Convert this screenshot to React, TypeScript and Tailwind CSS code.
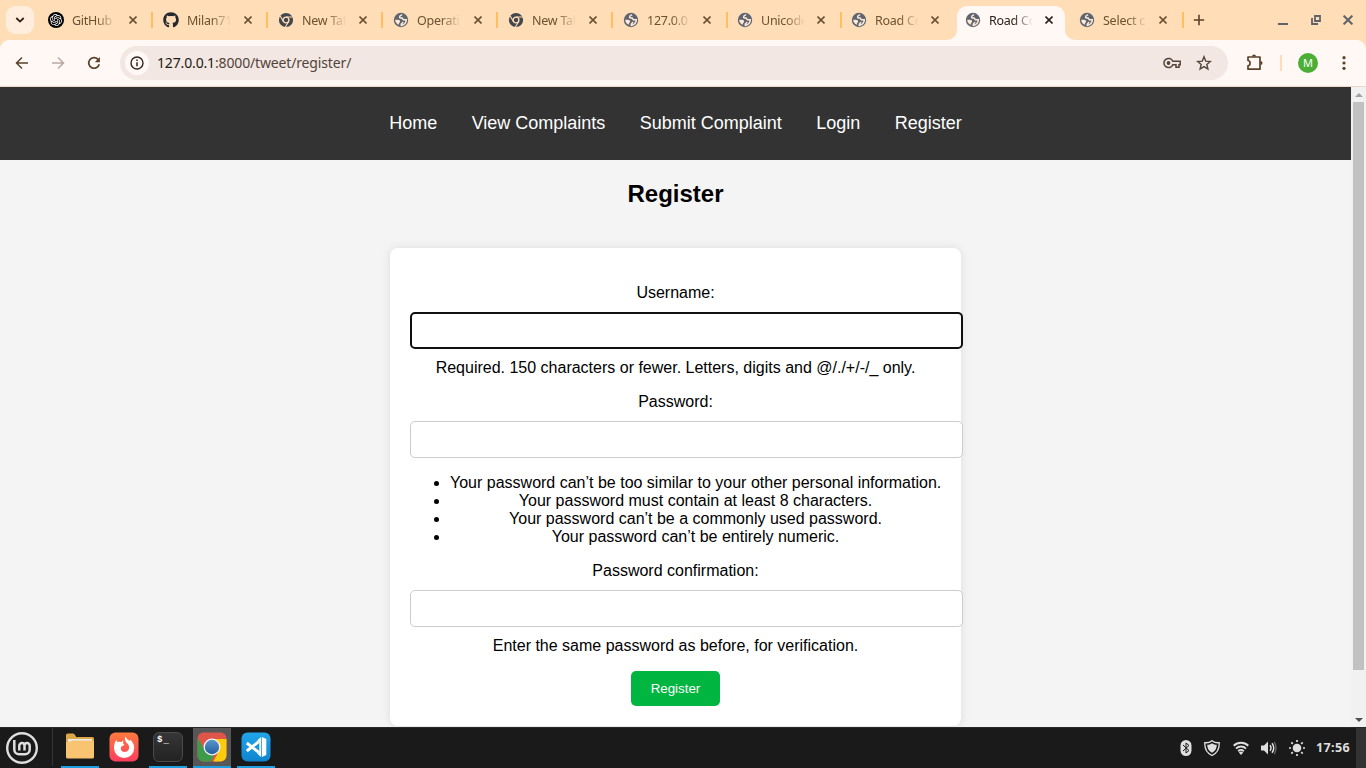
import React from "react";
import { FaGithub } from "react-icons/fa";
import { SiOpenai } from "react-icons/si";

type Kind = "openai" | "github" | "chrome" | "globe";
type TabInfo = { icon: Kind; title: string; width: string; gap: string; active?: boolean; separator?: boolean };

const tabs: TabInfo[] = [
  { icon: "openai", title: "GitHub", width: "w-[115px]", gap: "ml-[13px]", separator: true },
  { icon: "github", title: "Milan71", width: "w-[115px]", gap: "ml-[13px]", separator: true },
  { icon: "chrome", title: "New Tab", width: "w-[115px]", gap: "ml-[13px]", separator: true },
  { icon: "globe", title: "Operati", width: "w-[115px]", gap: "ml-[13px]", separator: true },
  { icon: "chrome", title: "New Tab", width: "w-[115px]", gap: "ml-[13px]", separator: true },
  { icon: "globe", title: "127.0.0", width: "w-[114px]", gap: "ml-3", separator: true },
  { icon: "globe", title: "Unicode", width: "w-[114px]", gap: "ml-3", separator: true },
  { icon: "globe", title: "Road Co", width: "w-[114px]", gap: "ml-3" },
  { icon: "globe", title: "Road Co", width: "w-[114px]", gap: "ml-3", active: true },
  { icon: "globe", title: "Select c", width: "w-[114px]", gap: "ml-3", separator: true },
];

function Favicon({ kind }: { kind: Kind }) {
  if (kind === "openai")
    return (
      <span className="flex size-4 items-center justify-center rounded-full bg-black">
        <SiOpenai className="size-3 text-white" />
      </span>
    );
  if (kind === "github") return <FaGithub className="size-4 text-[#24292f]" />;
  if (kind === "chrome")
    return (
      <svg viewBox="0 0 16 16" className="size-4">
        <circle cx="8" cy="8" r="7.1" fill="#41474d" />
        <circle cx="8" cy="8" r="2.9" fill="none" stroke="#ffddb6" strokeWidth="1.4" />
        <path d="M8 5h6.500M5.400 9.500L2.200 4M10.600 9.500L7.400 15" stroke="#ffddb6" strokeWidth="1.100" />
      </svg>
    );
  return (
    <svg viewBox="0 0 16 16" className="size-4">
      <circle cx="8" cy="8" r="7.2" fill="#5f6570" />
      <path
        d="M9.200 2.600C8 3 6.600 3.600 6.600 4.900c0 1.300 1.200 1.200 2.200 1.100.9 0 .9.700 1.200 1.300.4.800 1.700.500 3.300.5-.1 2.800-2 5.100-5 5.600v-1.300c.8-.7 1.700-1.200 1.400-2.200"
        fill="none"
        stroke="#ffead6"
        strokeWidth="1.500"
      />
      <path d="M2.200 7.800h2.700c1.300 0 2.300.7 2.200 1.900-.1 1-1.200.9-1.200 1.700v1.400C3.600 12 2.200 10.200 2.200 7.800z" fill="#ffead6" />
    </svg>
  );
}

function Cross({ className }: { className: string }) {
  return (
    <svg viewBox="0 0 8 8" className={className}>
      <path d="M.5.5l7 7M7.500.5l-7 7" stroke="currentColor" strokeWidth="1.600" />
    </svg>
  );
}

function Tab({ tab }: { tab: TabInfo }) {
  return (
    <div className={`flex h-[34px] shrink-0 ${tab.width}`}>
      <div
        className={`relative flex h-[34px] w-[108px] items-center pb-[6px] pl-2 ${
          tab.active ? "rounded-t-[10px] bg-[#fff8f5] text-[#2b201a]" : "text-[#6b5233]"
        }`}
      >
        {tab.active && (
          <>
            <svg viewBox="0 0 10 10" className="absolute bottom-0 -left-[10px] size-[10px]">
              <path d="M10 0v10H0A10 10 0 0 0 10 0z" fill="#fff8f5" />
            </svg>
            <svg viewBox="0 0 10 10" className="absolute -right-[10px] bottom-0 size-[10px]">
              <path d="M0 0v10h10A10 10 0 0 1 0 0z" fill="#fff8f5" />
            </svg>
          </>
        )}
        <Favicon kind={tab.icon} />
        <span className="mt-px ml-2 w-[44px] overflow-hidden text-[12.500px] leading-[18px] tracking-[-0.250px] whitespace-nowrap [mask-image:linear-gradient(to_right,#000_55%,transparent)]">
          {tab.title}
        </span>
        <Cross className={`size-2 shrink-0 ${tab.gap}`} />
      </div>
      {tab.separator && <div className="mt-[6px] ml-[3px] h-4 w-[2px] bg-[#ffbf60]" />}
    </div>
  );
}

function TabStrip() {
  return (
    <div className="flex h-10 bg-[#ffddb6] pt-[6px]">
      <div className="ml-[6px] flex size-7 shrink-0 items-center justify-center rounded-[9px] bg-[#ffeedd]">
        <svg viewBox="0 0 10 6" className="h-[6px] w-[10px]">
          <path d="M1.300 1L5 4.600 8.700 1" fill="none" stroke="#2e2014" strokeWidth="1.800" />
        </svg>
      </div>
      <div className="ml-[6px] flex">
        {tabs.map((tab, i) => (
          <Tab key={i} tab={tab} />
        ))}
      </div>
      <svg viewBox="0 0 12 12" className="mt-2 ml-[8px] size-3 shrink-0">
        <path d="M6 .8v10.400M.8 6h10.400" stroke="#5a4128" strokeWidth="1.600" />
      </svg>
      <div className="ml-auto flex h-7 items-center gap-[22px] pr-[13px] text-[#5d626b]">
        <svg viewBox="0 0 10 10" className="mr-px size-[10px]">
          <path d="M0 9h10" stroke="currentColor" strokeWidth="2" />
        </svg>
        <svg viewBox="0 0 10 10" className="size-[10px]">
          <path d="M4 1h5v5H4zM1 3v6h6" fill="none" stroke="currentColor" strokeWidth="1.800" />
        </svg>
        <Cross className="size-[10px]" />
      </div>
    </div>
  );
}

function Toolbar() {
  return (
    <div className="h-[47px] bg-[#ffddb6]">
      <div className="flex h-[47px] items-center rounded-t-[9px] border-b border-[#f1d6c3] bg-[#fff8f5] text-[#5a4128]">
        <svg viewBox="0 0 14 14" className="ml-[15px] size-[14px]">
          <path d="M13 7H2M7 1.500L1.500 7 7 12.500" fill="none" stroke="currentColor" strokeWidth="1.500" />
        </svg>
        <svg viewBox="0 0 14 14" className="ml-[22px] size-[14px] text-[#b7aaa2]">
          <path d="M1 7h11M7 1.500L12.500 7 7 12.500" fill="none" stroke="currentColor" strokeWidth="1.500" />
        </svg>
        <svg viewBox="0 0 14 14" className="ml-[22px] size-[14px]">
          <path d="M12.200 8.200A5.300 5.300 0 1 1 11 3.400l1 1" fill="none" stroke="currentColor" strokeWidth="1.700" />
          <path d="M12.900 1v5.200H7.800z" fill="currentColor" />
        </svg>
        <div className="ml-[19px] flex h-[34px] w-[1108px] items-center rounded-full bg-[#f2e7e2] pl-[5px]">
          <div className="flex size-6 items-center justify-center rounded-full bg-[#fff8f5]">
            <svg viewBox="0 0 14 14" className="size-[14px] text-[#2e2723]">
              <circle cx="7" cy="7" r="6" fill="none" stroke="currentColor" strokeWidth="1.400" />
              <path d="M7 6.200v4M7 3.500v1.500" stroke="currentColor" strokeWidth="1.500" />
            </svg>
          </div>
          <span className="mb-px ml-2 w-[200px] text-[14px] tracking-[-0.150px] whitespace-nowrap text-[#51443b]">
            <span className="text-[#241a14]">127.0.0.1</span>:8000/tweet/register/
          </span>
          <svg viewBox="0 0 18 12" className="ml-auto h-3 w-[18px] text-[#55453b]">
            <path
              d="M9.800 4.300A4.600 4.600 0 1 0 9.800 7.700h3.200v2.500h3V7.700h1.200V4.300z"
              fill="none"
              stroke="currentColor"
              strokeWidth="1.500"
            />
            <circle cx="5.500" cy="6" r="1.900" fill="currentColor" />
          </svg>
          <svg viewBox="0 0 16 16" className="mr-4 ml-[15px] size-4 text-[#55453b]">
            <path
              d="M8 1.800l1.700 4.300 4.600.4-3.500 3 1.100 4.500L8 11.600 4.100 14l1.100-4.500-3.500-3 4.600-.4z"
              fill="none"
              stroke="currentColor"
              strokeWidth="1.400"
            />
          </svg>
        </div>
        <svg viewBox="0 0 17 17" className="mt-[-2px] ml-[18px] size-[17px]">
          <path
            d="M2 3h12v12.200H2v-3.400c2.800-.5 2.800-4.800 0-5.300z"
            fill="none"
            stroke="currentColor"
            strokeWidth="1.700"
            strokeLinejoin="round"
          />
          <path d="M6 2.500a2 2 0 0 1 4 0zM14.500 7a2 2 0 0 1 0 4z" fill="currentColor" />
        </svg>
        <div className="ml-[17px] h-4 w-[2px] bg-[#ffddb6]" />
        <div className="ml-4 flex size-5 items-center justify-center rounded-full bg-[#4caf35] text-[11px] text-white">
          M
        </div>
        <svg viewBox="0 0 4 14" className="ml-6 h-[14px] w-1">
          <circle cx="2" cy="1.700" r="1.600" fill="currentColor" />
          <circle cx="2" cy="7" r="1.600" fill="currentColor" />
          <circle cx="2" cy="12.300" r="1.600" fill="currentColor" />
        </svg>
      </div>
    </div>
  );
}

function Field({ focused }: { focused?: boolean }) {
  return (
    <input
      className={`mt-[10px] block h-[37px] w-[553px] rounded-[5px] bg-white px-2 outline-none ${
        focused ? "border-2 border-[#101010]" : "border border-[#ccc]"
      }`}
    />
  );
}

const rules = [
  "Your password can’t be too similar to your other personal information.",
  "Your password must contain at least 8 characters.",
  "Your password can’t be a commonly used password.",
  "Your password can’t be entirely numeric.",
];

function Page() {
  return (
    <div className="flex h-[640px] bg-[#f4f4f4] font-['Liberation_Sans',sans-serif] text-black">
      <main className="h-[640px] w-[1351px] overflow-hidden">
        <nav className="flex h-[73px] items-center justify-center gap-[34.450px] bg-[#333] text-[18px] text-white">
          <a>Home</a>
          <a>View Complaints</a>
          <a>Submit Complaint</a>
          <a>Login</a>
          <a>Register</a>
        </nav>
        <h2 className="mt-5 text-center text-2xl leading-7 font-bold">Register</h2>
        <form className="mx-auto mt-10 h-[478px] w-[571px] rounded-[8px] bg-white px-5 pt-9 text-center text-base leading-[18px] shadow-[0_0_10px_rgba(0,0,0,0.1)]">
          <label className="block">Username:</label>
          <Field focused />
          <p className="mt-[10px]">Required. 150 characters or fewer. Letters, digits and @/./+/-/_ only.</p>
          <label className="mt-4 block">Password:</label>
          <Field />
          <ul className="mt-4 list-disc pl-10 whitespace-nowrap">
            {rules.map((rule) => (
              <li key={rule}>{rule}</li>
            ))}
          </ul>
          <label className="mt-4 block">Password confirmation:</label>
          <Field />
          <p className="mt-[10px]">Enter the same password as before, for verification.</p>
          <button type="button" className="mt-4 h-[35px] w-[89px] rounded-[5px] bg-[#00b640] text-[13.333px] text-white">
            Register
          </button>
        </form>
      </main>
      <div className="flex w-[15px] flex-col items-center bg-[#f1f1f1]">
        <svg viewBox="0 0 8 4" className="mt-[6px] h-1 w-2">
          <path d="M0 4l4-4 4 4z" fill="#a3a3a3" />
        </svg>
        <div className="mt-[5px] h-[568px] w-[11px] bg-[#c1c1c1]" />
        <svg viewBox="0 0 8 4" className="mt-auto mb-[5px] h-1 w-2">
          <path d="M0 0l4 4 4-4z" fill="#505050" />
        </svg>
      </div>
    </div>
  );
}

function Launcher({ open, active, children }: { open?: boolean; active?: boolean; children: React.ReactNode }) {
  return (
    <div
      className={`flex h-10 w-[38px] items-center justify-center border-b-2 ${
        open ? "border-[#1e9fe0]" : "border-transparent"
      } ${active ? "bg-[#575757]" : ""}`}
    >
      {children}
    </div>
  );
}

function Taskbar() {
  return (
    <div className="flex h-[41px] border-t border-[#292929] bg-[#1a1a1a] text-[#dfdfdf]">
      <svg viewBox="0 0 32 32" className="mt-1 ml-[6px] size-8">
        <circle cx="16" cy="16" r="14.800" fill="none" stroke="#dedede" strokeWidth="2.400" />
        <path
          d="M8.300 8v9.500a4.800 4.800 0 0 0 4.800 4.800h5.800a4.800 4.800 0 0 0 4.800-4.800V13.600a2.600 2.600 0 0 0-5.200 0v5M18.500 13.600a2.600 2.600 0 0 0-5.200 0v5"
          fill="none"
          stroke="#dedede"
          strokeWidth="2.500"
        />
      </svg>
      <div className="ml-[14px] h-[38px] w-px bg-[#343434]" />
      <div className="ml-2 flex gap-[6px]">
        <Launcher open>
          <svg viewBox="0 0 28 26" className="mb-[3px] h-[26px] w-7">
            <path d="M0 2q0-1.500 1.500-1.500H7q1 0 1.700 1l1.500 2.500H26.500Q28 4 28 5.500V12H0z" fill="#dda648" />
            <path d="M2 6h24v4H2z" fill="#ececec" />
            <path d="M0 10q0-1.500 1.500-1.500H4L6 7.500h20.500Q28 7.500 28 9v15q0 1.500-1.500 1.500h-25Q0 25.500 0 24z" fill="#f8c471" />
          </svg>
        </Launcher>
        <Launcher>
          <svg viewBox="0 0 30 30" className="size-[30px]">
            <defs>
              <linearGradient id="fire" x1="0" y1="0" x2="0" y2="1">
                <stop stopColor="#ff7a3d" />
                <stop offset="1" stopColor="#ff3e5e" />
              </linearGradient>
            </defs>
            <rect x=".5" y=".5" width="29" height="29" rx="6" fill="url(#fire)" />
            <path
              d="M16.500 4.500c1 2.500 2.500 3 4 4.500l.5-1.500c2.500 2 4.300 5 4.200 8.300A10.100 10.100 0 0 1 5 16.200c-.2-3.500 1-6.400 2.300-8.200l1.300 2.300c1.200-.5 2.300-.6 3.500-.1l2.200-2-.2 3.500 1.500 1.400-2.800 1.200c-1.900 1.600-.7 5.800 2.600 5.800 4.600 0 6-4.800 3.500-8-2.200-2-3.700-4.600-2.400-7.600z"
              fill="#fff"
            />
          </svg>
        </Launcher>
        <Launcher open>
          <div className="flex size-[30px] items-start rounded-[6px] border border-[#4a4a4a] bg-linear-to-b from-[#363636] to-[#232323] pt-[2px] pl-[3px] font-['Liberation_Mono',monospace] text-[9px] leading-[10px] font-bold text-white">
            $<span className="mt-px ml-px">_</span>
          </div>
        </Launcher>
        <Launcher open active>
          <svg viewBox="0 0 30 30" className="size-[30px]">
            <defs>
              <clipPath id="tile">
                <rect x=".5" y=".5" width="29" height="29" rx="6" />
              </clipPath>
              <linearGradient id="lens" x1="0" y1="0" x2="0" y2="1">
                <stop stopColor="#5b97cc" />
                <stop offset="1" stopColor="#245f9f" />
              </linearGradient>
            </defs>
            <g clipPath="url(#tile)">
              <path d="M0 0h30v30H0z" fill="#e0554a" />
              <path d="M0 5l8 13 9 5-3 7H0z" fill="#3e9b4a" />
              <path d="M15 7h15v23H16l6-11z" fill="#fbcc0b" />
            </g>
            <circle cx="15" cy="15" r="8.500" fill="#f3f3f3" />
            <circle cx="15" cy="15" r="7.200" fill="url(#lens)" />
          </svg>
        </Launcher>
        <Launcher open>
          <svg viewBox="0 0 30 30" className="size-[30px]">
            <defs>
              <linearGradient id="code" x1="0" y1="0" x2="0" y2="1">
                <stop stopColor="#22a5ea" />
                <stop offset="1" stopColor="#0f84cf" />
              </linearGradient>
            </defs>
            <rect x=".5" y=".5" width="29" height="29" rx="6" fill="url(#code)" />
            <path d="M5.800 11L17.500 20.200M5.800 19L17.500 9.800" stroke="#fff" strokeWidth="2.900" />
            <path d="M16.200 8.500L20 5v20l-3.800-3.500 2.100-2V10.500z" fill="#fff" />
            <path d="M20.800 5l4.500 2v16l-4.500 2z" fill="#fff" />
          </svg>
        </Launcher>
      </div>
      <div className="ml-auto flex items-center">
        <svg viewBox="0 0 12 16" className="h-4 w-3">
          <rect x=".5" width="11" height="16" rx="5.500" fill="#dfdfdf" />
          <path d="M3 5l6 5.500L6 13V3l3 2.500L3 11" fill="none" stroke="#1a1a1a" strokeWidth="1" />
        </svg>
        <svg viewBox="0 0 16 16" className="ml-3 size-4">
          <path d="M8 .7c2 1.600 4.500 2.300 7.200 2C15.500 8.300 13.500 13 8 15.500 2.500 13 .5 8.300.8 2.700 3.500 3 6 2.300 8 .7z" fill="none" stroke="#dfdfdf" strokeWidth="1.300" />
          <path d="M8 3.300c1.500 1 3 1.500 4.800 1.500-.1 3.700-1.500 6.300-4.800 8-3.300-1.700-4.700-4.300-4.800-8C5 4.800 6.500 4.300 8 3.300z" fill="#dfdfdf" />
        </svg>
        <svg viewBox="0 0 16 14" className="ml-[13px] h-[14px] w-4">
          <path d="M.7 4.700a10.400 10.400 0 0 1 14.600 0M3 7.600a7.100 7.100 0 0 1 10 0M5.200 10.200a4 4 0 0 1 5.600 0" fill="none" stroke="#dfdfdf" strokeWidth="1.900" />
          <path d="M8 14l-2.200-2.400a3 3 0 0 1 4.400 0z" fill="#dfdfdf" />
        </svg>
        <svg viewBox="0 0 16 14" className="ml-3 h-[14px] w-4">
          <path d="M0 4.500h3L7 .5v13l-4-4H0z" fill="#dfdfdf" />
          <path d="M9 4.200q2 2.800 0 5.600M11 2.200q3.500 4.800 0 9.600" fill="none" stroke="#dfdfdf" strokeWidth="1.500" />
          <path d="M13.200.8q3.600 6.200 0 12.400" fill="none" stroke="#666" strokeWidth="1.300" />
        </svg>
        <svg viewBox="0 0 16 16" className="ml-3 size-4">
          <circle cx="8" cy="8" r="4.300" fill="#dfdfdf" />
          <path d="M8 0v2M8 14v2M0 8h2M14 8h2M2.300 2.300l1.500 1.500M12.200 12.200l1.500 1.500M2.300 13.700l1.500-1.500M12.200 3.800l1.500-1.500" stroke="#dfdfdf" strokeWidth="1.700" />
        </svg>
        <span className="mt-px ml-[11px] w-[35px] text-[12.500px] font-bold tracking-[0.400px] whitespace-nowrap">17:56</span>
        <div className="ml-[5px] h-10 w-[10px] bg-[#333]" />
      </div>
    </div>
  );
}

export default function App() {
  return (
    <div className="h-[768px] w-[1366px] overflow-hidden font-['Noto_Sans',sans-serif]">
      <TabStrip />
      <Toolbar />
      <Page />
      <Taskbar />
    </div>
  );
}
